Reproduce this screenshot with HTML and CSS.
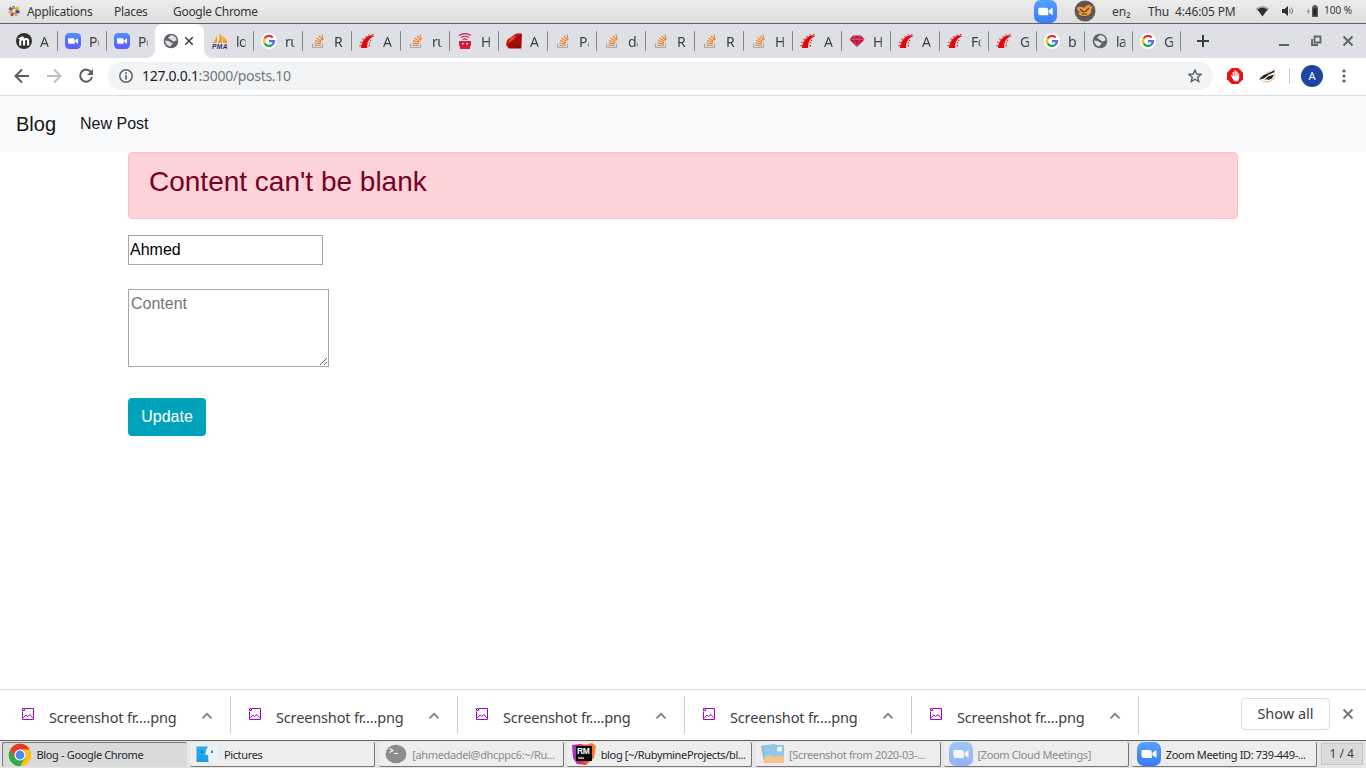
FILE: index.html
```html
<!DOCTYPE html>
<html lang="en">
<head>
<meta charset="utf-8">
<title>Blog</title>
<link rel="stylesheet" href="styles.css">
</head>
<body>
<svg class="defs" aria-hidden="true">
  <defs>
    <linearGradient id="g-zoom" x1="0" y1="0" x2="0" y2="1"><stop offset="0" stop-color="#52a0ff"/><stop offset="1" stop-color="#3a7cfb"/></linearGradient>
    <linearGradient id="g-zoom2" x1="0" y1="0" x2="0" y2="1"><stop offset="0" stop-color="#5090ff"/><stop offset="1" stop-color="#6058ff"/></linearGradient>
    <linearGradient id="g-ruby" x1="0" y1="0" x2="1" y2="1"><stop offset="0" stop-color="#e8301c"/><stop offset=".5" stop-color="#b80f0a"/><stop offset="1" stop-color="#8c0a0a"/></linearGradient>
    <linearGradient id="g-rm" x1="0" y1="0" x2="1" y2="0"><stop offset="0" stop-color="#9039d0"/><stop offset=".35" stop-color="#d02a70"/><stop offset=".6" stop-color="#ff4a30"/><stop offset="1" stop-color="#ff8a30"/></linearGradient>
    <linearGradient id="g-finder" x1="0" y1="0" x2="0" y2="1"><stop offset="0" stop-color="#28b4f0"/><stop offset="1" stop-color="#1c9ae4"/></linearGradient>
  </defs>
  <symbol id="cam" viewBox="0 0 16 16"><rect width="16" height="16" rx="4.2" fill="url(#g-zoom2)"/><path fill="#fff" d="M3 5.2h5.2a1.6 1.6 0 0 1 1.6 1.6v4H4.6A1.6 1.6 0 0 1 3 9.200zM10.300 7.200 13 5.200v5.600l-2.700-2z"/></symbol>
  <symbol id="cambig" viewBox="0 0 24 24"><rect width="24" height="24" rx="7" fill="url(#g-zoom)"/><path fill="#fff" d="M4.500 8h8a2.300 2.300 0 0 1 2.300 2.300V16H6.800a2.300 2.300 0 0 1-2.300-2.300zM15.500 10.800 19.500 8v8l-4-2.800z"/></symbol>
  <symbol id="moodle" viewBox="0 0 16 16"><circle cx="8" cy="8" r="8" fill="#303030"/><path d="M4.300 12.500V8a1.900 1.900 0 0 1 3.800 0V12.500M8.100 8a2 2 0 0 1 4 0V12.500" fill="none" stroke="#fff" stroke-width="2.100"/><path d="M1.500 5.800 6.500 3.200 8.500 4.700 4.500 6.300z" fill="#fff"/></symbol>
  <symbol id="globe" viewBox="0 0 16 16"><circle cx="8" cy="8" r="7.300" fill="#5f6368"/><path fill="#dfe1e6" d="M8.800 2.200c-2.600.2-1.600 1.500-2.800 1.900-1 .3-1.100 1.400-.2 1.500 1.300.1 1.100 1.300 2.300 1.300 1.300 0 1.200 1.600 2.600 1.500 1.200 0 1.500-.8 2.900-.6.300-2.600-1.800-5.300-4.800-5.600zM2.100 7.600c.2 3 2.300 5.600 5.500 6 .3-1 .3-1.900 1.300-2.200 1.200-.4.500-1.900-.8-1.800-1.200.1-1.200-1.400-2.500-1.500z"/></symbol>
  <symbol id="pma" viewBox="0 0 16 16"><path fill="#f8981d" d="M.3 10C3 8 4 5 4.300 2.400 5.500 5 5.200 8 4.800 10zM5.600 10C7.800 7 8 4 7.600 .2 11 4 11 7 9.800 10zM10.800 10c.7-2.500.6-4.500-.2-7.200 2.600 2.200 4 4.600 4.900 7.200z"/><text x="0" y="16" font-family="Liberation Sans, sans-serif" font-weight="700" font-style="italic" font-size="6.600" textLength="15.500" fill="#302b70">PMA</text></symbol>
  <symbol id="google" viewBox="0 0 16 16"><circle cx="8" cy="8" r="8" fill="#fff"/><g fill="none" stroke-width="2.300"><path stroke="#ea3035" d="M3.700 5.400A5 5 0 0 1 11.700 4.500"/><path stroke="#fbc010" d="M3.700 5.400a5 5 0 0 0 0 5.200"/><path stroke="#12a84b" d="M3.700 10.500a5 5 0 0 0 7.500 1.300"/><path stroke="#5270f4" d="M8 8.200h5a5 5 0 0 1-1.900 3.700"/></g></symbol>
  <symbol id="so" viewBox="0 0 16 16"><path d="M2.600 10.500V14.400h10v-3.900" fill="none" stroke="#a0a5aa" stroke-width="1"/><path d="M4.400 12.300h6.400M4.500 10l6.400.7M5.100 7.500l6 1.900M6.400 5l5.300 3.400M8.900 2.800l3.700 4.600M11.900 1.500l1.300 5.300" stroke="#f47a1c" stroke-width="1.050"/></symbol>
  <symbol id="rails" viewBox="0 0 16 16"><path fill="#e00808" d="M2 15C2.200 9 6.200 3.300 12.500 2.200l3.200.7C10.200 4.700 7.700 9 8.200 15z"/><path fill="#e00808" d="M.5 12h1.200v1.300H.3zM1.700 8.300l1.100.6-.5 1-1.200-.4zM4 5.300l.9.9-.8.8-1-.9zM7.200 2.800l.6 1.100-.9.600-.7-1.100zM10.600 1.200l.2 1.200-1.100.3-.3-1.200zM14.500 1l-.2 1.100-1-.2V.8zM9.600 12h1.500v1.200H9.700zM10 9.200l1.400.4-.4 1-1.300-.4zM11.300 6.800l1.200.7-.6.800-1.100-.7z"/></symbol>
  <symbol id="robot" viewBox="0 0 16 16"><g fill="none" stroke="#d31a40" stroke-width="1.100"><path d="M2 2.500q6-3.800 12 0M3.800 4.600q4.200-2.700 8.400 0M5.700 6.500q2.300-1.300 4.600 0"/></g><path fill="#d31a40" d="M2 8h12v5H2zM3 12.500h10V16H3z"/><path fill="#f6dbe2" d="M5 10h1.600v1.600H5zM9.400 10H11v1.600H9.400z"/></symbol>
  <symbol id="ruby" viewBox="0 0 16 16"><path fill="url(#g-ruby)" d="M10 .5h5.500L16 2l-.7 13.500H3L0 12l1-5z"/><path d="m3 15 2-5 5-2 5-6M5 10l8 5M10 8l3 7" fill="none" stroke="#6d0609" stroke-width=".7"/><path d="m2 9 4-5 4-2-2 4-4 3z" fill="#f0604a" opacity=".7"/></symbol>
  <symbol id="gem" viewBox="0 0 16 16"><path fill="#bd1239" d="M4 2.500h8l3.500 4L8 14 .5 6.500z"/><path d="M1 6.500h14M5 3l-.5 3.500L8 13l3.500-6.500L11 3 8 6.500z" fill="none" stroke="#e88098" stroke-width=".5"/></symbol>
  <symbol id="picture" viewBox="0 0 12 12"><path d="M3 .5h8.500v11H.5V3.500M.5.500h2v2h-2zM.5 9.500h1L4 7l1.500 1.500L8 6.500l1.500 2L10.500 9.500h1" fill="none" stroke="#9c06c6" stroke-width="1"/></symbol>
  <symbol id="up" viewBox="0 0 12 8"><path d="M2 6.500 6 2.500l4 4" fill="none" stroke="#7c7f83" stroke-width="1.500"/></symbol>
  <symbol id="close" viewBox="0 0 12 12"><path d="m1.500 1.500 9 9m0-9-9 9" fill="none" stroke="currentColor" stroke-width="1.900"/></symbol>
</svg>

<header class="panel">
  <svg class="apps-icon" viewBox="0 0 12 12"><g stroke-width="2.900" fill="none"><path stroke="#84b03c" d="M5.500 .8v3.400"/><path stroke="#8a4a92" d="m1.300 3 3 2M3.500 11 5 7.500"/><path stroke="#e8a72c" d="m10.300 2.500-3 2.200M8.500 11 7 7.500"/><path stroke="#35559b" d="M11.500 7 7.500 6.500"/><path stroke="#e8a72c" d="M.7 7.300 4.500 6.500"/></g></svg>
  <span class="menu menu-apps">Applications</span>
  <span class="menu menu-places">Places</span>
  <span class="menu">Google Chrome</span>
  <div class="tray">
    <svg class="tray-zoom"><use href="#cambig"/></svg>
    <svg class="tray-fish" viewBox="0 0 22 22"><circle cx="11" cy="11" r="10.500" fill="#595d62"/><circle cx="11" cy="10.500" r="8.500" fill="#6b513d"/><path d="M3 8c3-2 5-1 7 0 2-3 5-4 7-3l-2 2 4-1-2 4c1 4-3 6-7 6-3 0-5-1-6-3l3-1-3-1z" fill="#ef9a42"/><path d="m6 9 3 3 3-1 3-3M8 14h5" fill="none" stroke="#663914" stroke-width="1.200"/></svg>
    <span class="lang">en₂</span>
    <span class="clock">Thu&nbsp; 4:46:05 PM</span>
    <svg class="wifi" viewBox="0 0 13 12"><path fill="#a0a2a3" d="M0 3.500Q6.500-1.500 13 3.500L11.500 6h-10z"/><path fill="#2c3032" d="M1.500 4.500q5-3.500 10 0L6.500 11.500z"/></svg>
    <svg class="volume" viewBox="0 0 13 12"><path fill="#2c3032" d="M1 4h2.500L7 1v10L3.500 8H1z"/><path d="M8.500 4q1.500 2 0 4M10.300 2.500q3 3.500 0 7" fill="none" stroke="#707476" stroke-width="1"/></svg>
    <svg class="battery" viewBox="0 0 13 12"><path fill="#55595b" d="M6 1.500h1.500V0h3v1.500H12V12H6z"/><path d="M7.500 3.500h3v7h-3z" fill="#1d2022"/><path fill="#888" d="m2.800 3-2 4h1.400L1.500 10l2.500-4H2.700z"/></svg>
    <span class="charge">100 %</span>
  </div>
</header>

<nav class="tabs">
  <div class="tab"><svg><use href="#moodle"/></svg><span>A</span></div>
  <div class="tab"><svg><use href="#cam"/></svg><span>Po</span></div>
  <div class="tab no-line"><svg><use href="#cam"/></svg><span>Po</span></div>
  <div class="tab active"><svg><use href="#globe"/></svg><svg class="tab-close"><use href="#close"/></svg></div>
  <div class="tab"><svg><use href="#pma"/></svg><span>lo</span></div>
  <div class="tab"><svg><use href="#google"/></svg><span>ru</span></div>
  <div class="tab"><svg><use href="#so"/></svg><span>R</span></div>
  <div class="tab"><svg><use href="#rails"/></svg><span>A</span></div>
  <div class="tab"><svg><use href="#so"/></svg><span>ru</span></div>
  <div class="tab"><svg><use href="#robot"/></svg><span>H</span></div>
  <div class="tab"><svg><use href="#ruby"/></svg><span>A</span></div>
  <div class="tab"><svg><use href="#so"/></svg><span>Pa</span></div>
  <div class="tab"><svg><use href="#so"/></svg><span>da</span></div>
  <div class="tab"><svg><use href="#so"/></svg><span>R</span></div>
  <div class="tab"><svg><use href="#so"/></svg><span>R</span></div>
  <div class="tab"><svg><use href="#so"/></svg><span>H</span></div>
  <div class="tab"><svg><use href="#rails"/></svg><span>A</span></div>
  <div class="tab"><svg><use href="#gem"/></svg><span>H</span></div>
  <div class="tab"><svg><use href="#rails"/></svg><span>A</span></div>
  <div class="tab"><svg><use href="#rails"/></svg><span>Fo</span></div>
  <div class="tab last-wide"><svg><use href="#rails"/></svg><span>G</span></div>
  <div class="tab narrow"><svg><use href="#google"/></svg><span>b</span></div>
  <div class="tab narrow"><svg><use href="#globe"/></svg><span>la</span></div>
  <div class="tab narrow"><svg><use href="#google"/></svg><span>G</span></div>
  <svg class="new-tab" viewBox="0 0 12 12"><path d="M6 0v12M0 6h12" stroke="#3c4043" stroke-width="2"/></svg>
  <div class="window-buttons">
    <svg viewBox="0 0 12 12"><path d="M1 10h10" stroke="#5f6368" stroke-width="2"/></svg>
    <svg viewBox="0 0 12 12"><path d="M4.500 1.500h6v6h-6zM2 4v6h6" fill="none" stroke="#5f6368" stroke-width="1.800"/></svg>
    <svg><use href="#close"/></svg>
  </div>
</nav>

<div class="toolbar">
  <svg class="nav-icon" viewBox="0 0 16 16"><path d="M15 8H2M8 1.500 1.500 8 8 14.500" fill="none" stroke="#5a5e63" stroke-width="2"/></svg>
  <svg class="nav-icon" viewBox="0 0 16 16"><path d="M1 8h13M8 1.500 14.500 8 8 14.500" fill="none" stroke="#bbbdbf" stroke-width="2"/></svg>
  <svg class="nav-icon" viewBox="0 0 16 16"><path d="M13.300 4.500A6 6 0 1 0 14 9" fill="none" stroke="#5a5e63" stroke-width="2"/><path d="M15 1v6H9z" fill="#5a5e63"/></svg>
  <div class="address">
    <svg class="info" viewBox="0 0 14 14"><circle cx="7" cy="7" r="6.200" fill="none" stroke="#5f6368" stroke-width="1.500"/><path d="M7 6v4.500M7 3.300v1.600" stroke="#5f6368" stroke-width="1.700"/></svg>
    <span class="url"><b>127.0.0.1</b>:3000/posts.10</span>
    <svg class="star" viewBox="0 0 14 14"><path d="m7 1 1.700 4 4.300.4-3.300 2.800 1 4.300L7 10.200l-3.700 2.300 1-4.300L1 5.400 5.300 5z" fill="none" stroke="#5a5e63" stroke-width="1.400"/></svg>
  </div>
  <svg class="adblock" viewBox="0 0 16 16"><path d="M4.700 0h6.600L16 4.700v6.600L11.300 16H4.700L0 11.300V4.700z" fill="#f10d0d"/><path d="M6.300 4.500V9M8.200 3V9M10 4V9M4.500 7.500 6 10M11.500 6v4" stroke="#fff" stroke-width="1.300" stroke-linecap="round"/><path d="M5.600 8h6.500v2q0 3.500-3 3.500-2.500 0-3.500-3z" fill="#fff"/></svg>
  <svg class="badger" viewBox="0 0 17 14"><path d="m1 10 1-3 4-1 3-3 4 .5L15.500 1l.5 6-1.500 3-4 2.500-6 .5z" fill="#fff" stroke="#e8a058" stroke-width=".8"/><path d="M0 10.500 5 6l5-2 5.500-3-.8 2.500-4.700 2-5 4zM5 11.500l4-4 6-2-2 4-4 1.500-1-1z" fill="#222"/></svg>
  <i class="toolbar-line"></i>
  <span class="avatar">A</span>
  <svg class="more" viewBox="0 0 4 14"><circle cx="2" cy="2" r="1.600"/><circle cx="2" cy="7" r="1.600"/><circle cx="2" cy="12" r="1.600"/></svg>
</div>

<main class="page">
  <nav class="navbar"><a class="brand">Blog</a><a class="nav-link">New Post</a></nav>
  <div class="content">
    <div class="alert"><h3>Content can't be blank</h3></div>
    <form>
      <input class="title-field" type="text" value="Ahmed">
      <textarea class="content-field" placeholder="Content"></textarea>
      <button class="submit" type="button">Update</button>
    </form>
  </div>
</main>

<section class="downloads">
  <div class="download"><svg class="file"><use href="#picture"/></svg><span>Screenshot fr....png</span><svg class="up"><use href="#up"/></svg></div>
  <div class="download"><svg class="file"><use href="#picture"/></svg><span>Screenshot fr....png</span><svg class="up"><use href="#up"/></svg></div>
  <div class="download"><svg class="file"><use href="#picture"/></svg><span>Screenshot fr....png</span><svg class="up"><use href="#up"/></svg></div>
  <div class="download"><svg class="file"><use href="#picture"/></svg><span>Screenshot fr....png</span><svg class="up"><use href="#up"/></svg></div>
  <div class="download"><svg class="file"><use href="#picture"/></svg><span>Screenshot fr....png</span><svg class="up"><use href="#up"/></svg></div>
  <div class="show-all"><span>Show all</span></div>
  <svg class="shelf-close"><use href="#close"/></svg>
</section>

<footer class="taskbar">
  <div class="task current"><svg viewBox="0 0 24 24"><circle cx="12" cy="12" r="11.300" fill="#fbc21b"/><path d="M2.200 6.400A11.300 11.300 0 0 1 21.800 6.400H12L7 15z" fill="#e33b2e"/><path d="M2.200 6.400A11.300 11.300 0 0 0 12 23.300L17 15H7z" fill="#2da94f"/><circle cx="12" cy="12" r="5.600" fill="#fff"/><circle cx="12" cy="12" r="4.400" fill="#4a8cf5"/></svg><span>Blog - Google Chrome</span></div>
  <div class="task"><svg viewBox="0 0 24 24"><path d="M10 4.500h12.500v15H12z" fill="#eaf4f9"/><path d="M1.500 4.500H13q-3 5-2.500 8.500H13l.5 7h-12z" fill="url(#g-finder)"/><path d="M7 8.500v2.500M17 8.500v2.500" stroke="#25587a" stroke-width="1.500"/></svg><span>Pictures</span></div>
  <div class="task minimized"><svg viewBox="0 0 24 24"><ellipse cx="12" cy="12" rx="10.500" ry="9.200" fill="#303030"/><path d="m5.500 6.500 3.500 2-3.500 2M10 11.500h4" fill="none" stroke="#fff" stroke-width="1.200"/></svg><span>[ahmedadel@dhcppc6:~/Ru...</span></div>
  <div class="task"><svg viewBox="0 0 24 24"><path d="M0 3 8 2l6 1 6-2 4 3-2 12-8 7-9-1-4-6z" fill="url(#g-rm)"/><path d="M4 4h16v15H4z" fill="#080808"/><text x="5" y="12" font-family="Liberation Sans, sans-serif" font-weight="700" font-size="8.500" fill="#fff">RM</text><path d="M6 16h6" stroke="#fff" stroke-width="1.200"/></svg><span>blog [~/RubymineProjects/bl...</span></div>
  <div class="task minimized"><svg viewBox="0 0 24 24"><path d="m0 4 14-2 2 17-13 1z" fill="#2c84b8"/><path d="M3 3h20v18H3z" fill="#35a5e8"/><path d="M3 16q5-5 10-1 5-3 10 0v6H3z" fill="#ff9a30"/><circle cx="18.500" cy="7" r="2.600" fill="#fff"/></svg><span>[Screenshot from 2020-03-...</span></div>
  <div class="task minimized"><svg><use href="#cambig"/></svg><span>[Zoom Cloud Meetings]</span></div>
  <div class="task"><svg><use href="#cambig"/></svg><span>Zoom Meeting ID: 739-449-...</span></div>
  <div class="pager">1 / 4</div>
</footer>
</body>
</html>
```
FILE: styles.css
```css
* { box-sizing: border-box; }
html, body { height: 100%; }
body {
  margin: 0;
  display: flex;
  flex-direction: column;
  overflow: hidden;
  background: #fff;
  font-family: "Noto Sans", sans-serif;
  color: #3c4043;
}
svg { display: block; flex: none; }
.defs { width: 0; height: 0; position: absolute; }
span { white-space: nowrap; }

/* desktop panel */
.panel {
  flex: none;
  height: 24px;
  display: flex;
  align-items: center;
  padding: 0 14px 1px 8px;
  border-bottom: 1px solid #626262;
  background: linear-gradient(#ececec, #dedede);
  font-size: 12px;
  color: #34383a;
}
.apps-icon { width: 12px; height: 12px; margin-right: 7px; }
.menu { letter-spacing: -0.3px; }
.menu-apps { width: 87px; }
.menu-places { width: 59px; }
.tray { margin-left: auto; display: flex; align-items: center; }
.tray-zoom { width: 23px; height: 23px; margin-right: 17px; }
.tray-fish { width: 22px; height: 22px; margin: 0 16px 0 0; }
.lang { width: 36px; font-size: 12px; }
.clock { width: 108px; letter-spacing: -0.15px; }
.wifi { width: 13px; height: 12px; margin-right: 12px; }
.volume { width: 13px; height: 12px; margin-right: 12px; }
.battery { width: 13px; height: 12px; margin-right: 5px; }
.charge { width: 28px; font-size: 10px; padding-bottom: 3px; }

/* tab strip */
.tabs {
  flex: none;
  height: 34px;
  display: flex;
  align-items: center;
  padding-left: 8px;
  background: #dee0e6;
}
.tab {
  position: relative;
  width: 49px;
  height: 34px;
  flex: none;
  display: flex;
  align-items: center;
  padding-left: 8px;
  font-size: 14px;
}
.tab.narrow { width: 48px; }
.tab.last-wide { width: 48px; }
.tab svg { width: 16px; height: 16px; }
.tab span {
  width: 10px;
  margin-left: 8px;
  overflow: hidden;
  letter-spacing: -0.5px;
  -webkit-mask-image: linear-gradient(to right, #000 75%, rgba(0, 0, 0, .3));
  mask-image: linear-gradient(to right, #000 75%, rgba(0, 0, 0, .3));
}
.tab::after {
  content: "";
  position: absolute;
  right: -1px;
  top: 7px;
  width: 1px;
  height: 20px;
  background: #85878b;
}
.tab.no-line::after, .tab.active::after { display: none; }
.tab.active { background: #fff; border-radius: 8px 8px 0 0; }
.tab.active::before {
  content: "";
  position: absolute;
  left: -8px;
  right: -8px;
  bottom: 0;
  height: 8px;
  background:
    radial-gradient(circle at 0 0, transparent 7.500px, #fff 8px) left / 8px 8px no-repeat,
    radial-gradient(circle at 100% 0, transparent 7.500px, #fff 8px) right / 8px 8px no-repeat;
}
.tab .tab-close { width: 10px; height: 10px; margin-left: 5px; }
.new-tab { width: 12px; height: 12px; margin-left: 17px; }
.window-buttons { display: flex; gap: 20px; margin: 0 12px 0 auto; color: #5f6368; }
.window-buttons svg { width: 12px; height: 12px; }

/* toolbar */
.toolbar {
  flex: none;
  height: 38px;
  display: flex;
  align-items: center;
  padding: 0 20px 2px 14px;
  border-bottom: 1px solid #dadce0;
}
.nav-icon { width: 16px; height: 16px; margin-right: 16px; }
.nav-icon + .nav-icon + .nav-icon { margin-right: 14px; }
.address {
  width: 1105px;
  height: 28px;
  display: flex;
  align-items: center;
  padding: 0 11px;
  border-radius: 14px;
  background: #f1f3f4;
}
.info { width: 14px; height: 14px; margin-right: 9px; }
.url { font-size: 14px; letter-spacing: -0.3px; color: #73777b; }
.url b { font-weight: 400; color: #202124; }
.star { width: 14px; height: 14px; margin-left: auto; }
.adblock { width: 16px; height: 16px; margin-left: 14px; }
.badger { width: 17px; height: 14px; margin-left: 16px; }
.toolbar-line { width: 1px; height: 16px; margin-left: 13px; background: #c9cbce; }
.avatar {
  width: 22px;
  height: 22px;
  margin-left: 11px;
  border-radius: 50%;
  background: #1e459e;
  color: #fff;
  font-size: 11px;
  line-height: 22px;
  text-align: center;
}
.more { width: 4px; height: 14px; margin-left: auto; fill: #5a5e63; }

/* web page */
.page {
  flex: 1;
  min-height: 0;
  font-family: "Liberation Sans", Arial, sans-serif;
  font-size: 16px;
  line-height: 24px;
  color: #212529;
}
.navbar {
  height: 56px;
  display: flex;
  align-items: center;
  gap: 24px;
  padding: 0 16px;
  background: #f8f9fb;
  color: #151515;
}
.brand { font-size: 20px; }
.content { padding: 0 128px; }
.alert {
  height: 67px;
  padding: 12px 20px;
  border: 1px solid #fdc0ca;
  border-radius: 4px;
  background: #fdd3da;
  color: #780020;
}
.alert h3 { margin: 0; font-size: 28px; font-weight: 500; line-height: 34px; }
form { display: flex; flex-direction: column; align-items: flex-start; padding-top: 16px; }
.title-field, .content-field {
  border: 1px solid #a6a6a6;
  border-radius: 0;
  background: #fff;
  color: #000;
  font: inherit;
  outline: 0;
}
.title-field { width: 195px; height: 30px; padding: 1px; margin: 0 0 24px; }
.content-field { width: 201px; height: 78px; padding: 2px; margin: 0 0 31px; }
.content-field::placeholder { color: #757575; }
.submit {
  width: 78px;
  height: 38px;
  padding: 0;
  border: 0;
  border-radius: 4px;
  background: #00a3bc;
  color: #fff;
  font: inherit;
}

/* download shelf */
.downloads {
  flex: none;
  height: 51px;
  display: flex;
  border-top: 1px solid #d8d8da;
}
.download {
  width: 227px;
  height: 38px;
  flex: none;
  display: flex;
  align-items: center;
  margin-top: 6px;
  padding-left: 18px;
  border-right: 1px solid #cbcdd0;
}
.download:first-child { width: 231px; padding-left: 22px; }
.file { width: 12px; height: 12px; margin: 0 15px 2px 0; }
.download span { width: 151px; padding-top: 4px; font-size: 14.500px; letter-spacing: -0.15px; }
.up { width: 14px; height: 9px; }
.show-all {
  width: 89px;
  height: 32px;
  margin: 8px 12px 0 102px;
  border: 1px solid #dadce0;
  border-radius: 4px;
  font-size: 14.500px;
  line-height: 29px;
  text-align: center;
}
.shelf-close { width: 12px; height: 12px; margin-top: 18px; color: #73767a; }

/* window list */
.taskbar {
  flex: none;
  height: 28px;
  display: flex;
  gap: 3.400px;
  padding: 1px 0 0 2px;
  border-top: 1px solid #626262;
  background: #e6e6e6;
}
.task {
  width: 185px;
  height: 25px;
  flex: none;
  display: flex;
  align-items: center;
  padding-left: 5px;
  border: solid #777;
  border-width: 0 1px 1px 0;
  border-radius: 2px;
  background: #ededed;
  font-size: 11px;
  letter-spacing: -0.35px;
  color: #25292b;
}
.task svg { width: 24px; height: 24px; margin-right: 4.500px; }
.task.current { border-width: 1px 0 0 1px; background: #dadada; }
.task.current span { padding-bottom: 1px; }
.task.minimized { color: #8a8c8d; }
.task.minimized svg { opacity: .5; }
.pager {
  width: 42px;
  height: 22px;
  margin-top: 1px;
  border: 1px solid #c6c6c6;
  background: #dadada;
  font-size: 12px;
  line-height: 19px;
  text-align: center;
}
```
